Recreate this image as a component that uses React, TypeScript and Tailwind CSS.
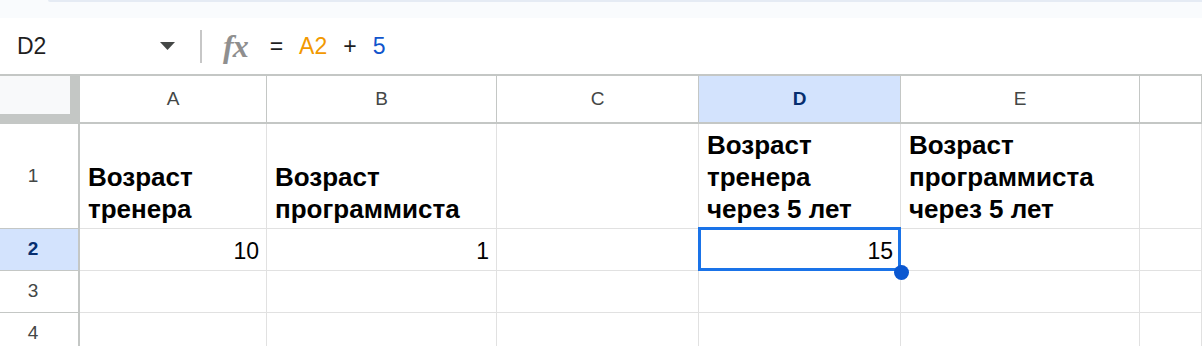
import React from "react";

// Column tracks: row header, A..F. Widths include each cell's right border.
const COLS = ["A", "B", "C", "D", "E", ""];

type Cell = { text?: string[]; num?: string };

const ROWS: { h: string; cells: Cell[] }[] = [
  {
    h: "h-[105px]",
    cells: [
      { text: ["Возраст", "тренера"] },
      { text: ["Возраст", "программиста"] },
      {},
      { text: ["Возраст", "тренера", "через 5 лет"] },
      { text: ["Возраст", "программиста", "через 5 лет"] },
      {},
    ],
  },
  { h: "h-[42px]", cells: [{ num: "10" }, { num: "1" }, {}, { num: "15" }, {}, {}] },
  { h: "h-[42px]", cells: [{}, {}, {}, {}, {}, {}] },
  { h: "h-[42px]", cells: [{}, {}, {}, {}, {}, {}] },
];

function FormulaBar() {
  return (
    <div className="flex h-[56px] items-center">
      <div className="flex w-[200px] items-center justify-between pl-[17px] pr-[25px]">
        <span className="text-[23px] text-[#1f1f1f]">D2</span>
        <svg width="15" height="8" viewBox="0 0 15 8">
          <path d="M0 0h15L7.5 8z" fill="#444746" />
        </svg>
      </div>
      <div className="h-[33px] w-[2px] bg-[#c7c7c7]" />
      <span className="ml-[21px] font-['Liberation_Serif',serif] text-[32px] font-bold italic leading-none tracking-[-1px] text-[#8f8f8f]">
        fx
      </span>
      <div className="ml-[22px] flex items-center gap-[16px] text-[23px]">
        <span className="text-[#1f1f1f]">=</span>
        <span className="text-[#f29900]">A2</span>
        <span className="text-[#1f1f1f]">+</span>
        <span className="text-[#1155cc]">5</span>
      </div>
    </div>
  );
}

function HeaderRow() {
  return (
    <>
      <div className="flex h-[48px] bg-[#c4c7c5]">
        <div className="h-[38px] w-[70px] bg-[#f8f9fa]" />
      </div>
      {COLS.map((c, i) => {
        const sel = c === "D";
        return (
          <div
            key={i}
            className={
              sel
                ? "flex h-[48px] items-center justify-center border-r border-b-2 border-[#c4c7c5] bg-[#d3e3fd] text-[19px] font-bold text-[#062e6f]"
                : "flex h-[48px] items-center justify-center border-r border-b-2 border-[#c4c7c5] text-[19px] text-[#444746]"
            }
          >
            {c}
          </div>
        );
      })}
    </>
  );
}

export default function App() {
  return (
    <div className="h-[346px] w-[1202px] overflow-hidden bg-white font-['Liberation_Sans',Arial,sans-serif]">
      <div className="h-[18px] bg-[#f9fbfd]">
        <div className="ml-[48px] h-[2px] rounded-bl-[8px] bg-[#e5ebf4]" />
      </div>
      <FormulaBar />
      <div className="grid grid-cols-[80px_187px_230px_202px_202px_239px_1fr] border-t-2 border-[#c4c7c5]">
        <HeaderRow />
        {ROWS.map((row, ri) => (
          <React.Fragment key={ri}>
            <div
              className={
                ri === 1
                  ? `${row.h} flex items-center justify-center border-r-2 border-b border-[#c4c7c5] bg-[#d3e3fd] pr-[12px] text-[19px] font-bold text-[#062e6f]`
                  : `${row.h} flex items-center justify-center border-r-2 border-b border-[#c4c7c5] pr-[12px] text-[19px] text-[#444746]`
              }
            >
              {ri + 1}
            </div>
            {row.cells.map((cell, ci) => {
              const selected = ri === 1 && ci === 3;
              return (
                <div
                  key={ci}
                  className={`${row.h} relative flex border-r border-b border-[#e1e1e1] text-black`}
                >
                  {cell.text && (
                    <div className="flex flex-col justify-end pb-[3px] pl-[8px] text-[26px] font-bold leading-[32px]">
                      {cell.text.map((t) => (
                        <span key={t}>{t}</span>
                      ))}
                    </div>
                  )}
                  {cell.num && (
                    <div className="flex w-full items-end justify-end pb-[6px] pr-[7px] text-[23px] leading-[25px]">
                      {cell.num}
                    </div>
                  )}
                  {selected && (
                    <div className="absolute -top-[2px] -left-[1px] -right-[1px] -bottom-[1px] z-10 border-[3px] border-[#1a73e8]">
                      <div className="absolute -right-[11px] -bottom-[12px] h-[15px] w-[15px] rounded-full bg-[#0b57d0]" />
                    </div>
                  )}
                </div>
              );
            })}
          </React.Fragment>
        ))}
      </div>
    </div>
  );
}
